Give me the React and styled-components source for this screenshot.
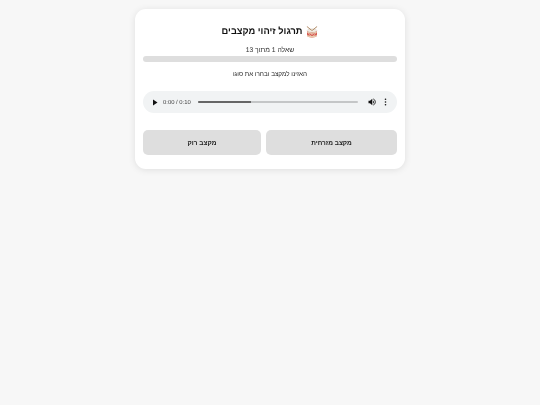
import styled, { createGlobalStyle } from 'styled-components'

const GlobalStyle = createGlobalStyle`
    html, body {
        margin: 0;
        min-height: 405px;
        background: #f7f7f7;
        font-family: "Liberation Sans", Arial, sans-serif;
        text-rendering: geometricPrecision;
    }
`

const Page = styled.div`
    display: flex;
    justify-content: center;
    padding-top: 9px;
`

const Card = styled.main`
    box-sizing: border-box;
    width: 270px;
    height: 160px;
    padding: 16px 8px 0;
    background: #fff;
    border-radius: 11px;
    box-shadow: 0 1px 7px rgba(0, 0, 0, 0.1);
    direction: rtl;
    text-align: center;
    color: #222;
    filter: blur(0.3px);
`

const Title = styled.h1`
    display: flex;
    justify-content: center;
    align-items: center;
    gap: 4px;
    height: 13px;
    margin: 0;
    font-size: 9.3px;
    font-weight: 700;
    line-height: 13px;
    color: #111;
`

const Question = styled.div`
    margin-top: 8px;
    font-size: 6.8px;
    line-height: 10px;
    color: #333;
`

const Progress = styled.div`
    height: 6px;
    background: #dedede;
    border-radius: 3px;
`

const Prompt = styled.p`
    margin: 8px 0 0;
    font-size: 6.3px;
    line-height: 9px;
    color: #222;
`

const Player = styled.div`
    display: flex;
    align-items: center;
    direction: ltr;
    height: 22px;
    margin-top: 12px;
    padding: 0 10px 0 9px;
    background: #f1f3f4;
    border-radius: 11px;
`

const Time = styled.span`
    margin-left: 5px;
    padding-top: 1px;
    font-size: 5.9px;
    color: #444;
    white-space: nowrap;
`

const Track = styled.div`
    flex: 1;
    height: 2px;
    margin: 0 10px 0 7px;
    background: #c4c6c7;
    border-radius: 1px;
    overflow: hidden;
`

const Played = styled.div`
    width: ${(props) => props.$percent}%;
    height: 100%;
    background: #666;
`

const Spacer = styled.span`
    width: 7px;
`

const Answers = styled.div`
    display: flex;
    gap: 5px;
    margin-top: 17px;
`

const Answer = styled.button`
    flex: ${(props) => props.$width} 0 0;
    height: 25px;
    padding: 0;
    border: 0;
    border-radius: 5px;
    background: #dedede;
    font-family: inherit;
    font-size: 6.5px;
    font-weight: 700;
    color: #222;
`

const PlayIcon = () => (
    <svg width="6" height="7" viewBox="0 0 6 7">
        <path d="M1 0.5 L5.5 3.5 L1 6.5 Z" fill="#111" />
    </svg>
)

const VolumeIcon = () => (
    <svg width="9" height="8" viewBox="0 0 9 8">
        <path d="M0.5 2.7 H2 L4.3 0.7 V7.3 L2 5.3 H0.5 Z" fill="#111" />
        <path d="M5.2 2.4 A1.9 1.9 0 0 1 5.2 5.6 Z" fill="#111" />
        <path d="M5.2 0.9 A3.3 3.3 0 0 1 5.2 7.1" fill="none" stroke="#111" strokeWidth="0.8" />
    </svg>
)

const MenuIcon = () => (
    <svg width="3" height="8" viewBox="0 0 3 8">
        <circle cx="1.5" cy="1.2" r="0.8" fill="#111" />
        <circle cx="1.5" cy="4" r="0.8" fill="#111" />
        <circle cx="1.5" cy="6.8" r="0.8" fill="#111" />
    </svg>
)

const DrumIcon = () => (
    <svg width="12" height="12" viewBox="0 0 13 13">
        <path d="M1.2 5.5 V10.4 C1.2 11.7 3.6 12.5 6.5 12.5 C9.4 12.5 11.8 11.7 11.8 10.4 V5.5 Z" fill="#d2473f" />
        <path d="M1.2 9.6 C3 11 10 11 11.8 9.6 V10.4 C11.8 11.7 9.4 12.5 6.5 12.5 C3.6 12.5 1.2 11.7 1.2 10.4 Z" fill="#e8cdb0" />
        <path d="M1.2 5.5 C3 7.6 10 7.6 11.8 5.5 V7 C10 9 3 9 1.2 7 Z" fill="#e8cdb0" />
        <path d="M2.6 8 L4.5 10.4 L6.5 8.4 L8.5 10.4 L10.4 8" fill="none" stroke="#f5e6d6" strokeWidth="0.7" />
        <ellipse cx="6.5" cy="5" rx="5.3" ry="1.9" fill="#f1ebe3" stroke="#c9bcac" strokeWidth="0.4" />
        <path d="M1.3 0.8 L6 4.6 M11.7 0.8 L7 4.6" stroke="#a9805a" strokeWidth="1" strokeLinecap="round" />
    </svg>
)

export default function App() {
    return (
        <Page>
            <GlobalStyle />
            <Card>
                <Title>
                    <DrumIcon />
                    <span>תרגול זיהוי מקצבים</span>
                </Title>
                <Question>שאלה 1 מתוך 13</Question>
                <Progress />
                <Prompt>האזינו למקצב ובחרו את סוגו</Prompt>
                <Player>
                    <PlayIcon />
                    <Time>0:00 / 0:10</Time>
                    <Track>
                        <Played $percent={33} />
                    </Track>
                    <VolumeIcon />
                    <Spacer />
                    <MenuIcon />
                </Player>
                <Answers>
                    <Answer $width={131}>מקצב מזרחית</Answer>
                    <Answer $width={118}>מקצב רוק</Answer>
                </Answers>
            </Card>
        </Page>
    )
}
